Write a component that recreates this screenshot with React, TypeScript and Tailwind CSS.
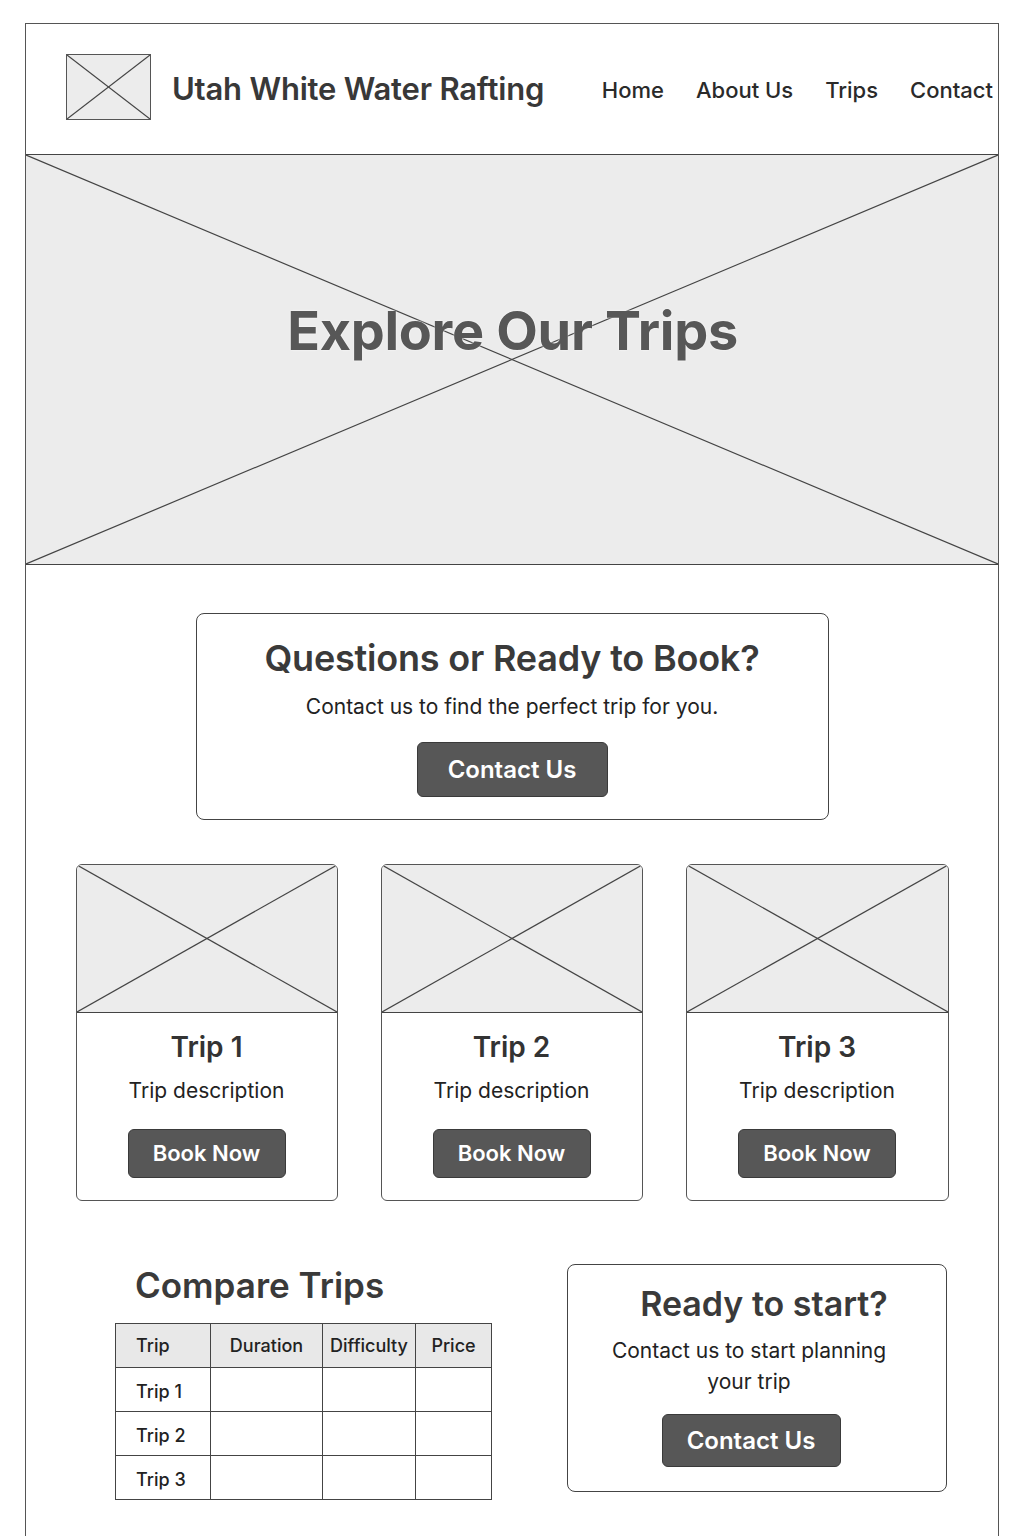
import React from "react";

const font = { fontFamily: "Inter, 'Noto Sans', sans-serif" };

// placeholder image: grey box with an X drawn corner to corner
function Cross({ className = "" }: { className?: string }) {
  return (
    <div className={`bg-[#ececec] ${className}`}>
      <svg
        className="absolute inset-0 w-full h-full"
        viewBox="0 0 100 100"
        preserveAspectRatio="none"
      >
        <line x1="0" y1="0" x2="100" y2="100" stroke="#444" strokeWidth="1.2" vectorEffect="non-scaling-stroke" />
        <line x1="100" y1="0" x2="0" y2="100" stroke="#444" strokeWidth="1.2" vectorEffect="non-scaling-stroke" />
      </svg>
    </div>
  );
}

const trips = ["Trip 1", "Trip 2", "Trip 3"];

function DarkButton({ children, className = "" }: { children: React.ReactNode; className?: string }) {
  return (
    <button
      className={`bg-[#575757] text-white font-semibold rounded-md border border-[#3a3a3a] flex items-center justify-center ${className}`}
    >
      {children}
    </button>
  );
}

export default function App() {
  return (
    <div className="bg-white min-h-[1536px] pt-[23px] px-[25px]" style={font}>
      <div className="border-x border-t border-[#555] min-h-[1513px]">
        {/* header */}
        <header className="h-[131px] flex items-center border-b border-[#444] pl-[40px] pr-[5px]">
          <Cross className="relative w-[85px] h-[66px] border border-[#555] -mt-[4px]" />
          <h1 className="ml-[21px] text-[31px] font-semibold text-[#383838] tracking-[-0.2px]">
            Utah White Water Rafting
          </h1>
          <nav className="ml-auto flex items-center gap-[32px] text-[22px] font-medium text-[#2a2a2a] mt-[2px]">
            <a>Home</a>
            <a>About Us</a>
            <a>Trips</a>
            <a>Contact</a>
          </nav>
        </header>

        {/* hero */}
        <div className="relative h-[410px] border-b border-[#444]">
          <Cross className="absolute inset-0" />
          <div className="relative h-full flex items-center justify-center pb-[58px]">
            <h2
              className="text-[54px] font-bold text-[#575757] tracking-[-0.3px] ml-[1px]"
              style={{ textShadow: "0 0 2px #fff" }}
            >
              Explore Our Trips
            </h2>
          </div>
        </div>

        {/* contact box */}
        <div className="flex justify-center pt-[48px]">
          <div className="w-[633px] h-[207px] border border-[#444] rounded-lg flex flex-col items-center pt-[18px]">
            <h3 className="text-[36px] font-semibold text-[#3a3a3a] leading-[52px] tracking-[-0.2px]">
              Questions or Ready to Book?
            </h3>
            <p className="text-[21px] text-[#222] mt-[9px] leading-[28px]">
              Contact us to find the perfect trip for you.
            </p>
            <DarkButton className="mt-[21px] w-[191px] h-[55px] text-[24px]">Contact Us</DarkButton>
          </div>
        </div>

        {/* cards */}
        <div className="grid grid-cols-[262px_262px_263px] justify-center gap-[43px] mt-[44px]">
          {trips.map((t) => (
            <div key={t} className="h-[337px] border border-[#555] rounded-md overflow-hidden flex flex-col items-center">
              <Cross className="relative w-full h-[148px] border-b border-[#444]" />
              <h4 className="mt-[15px] text-[28px] font-semibold text-[#333] leading-[38px]">{t}</h4>
              <p className="mt-[11px] text-[21px] text-[#222] leading-[28px]">Trip description</p>
              <DarkButton className="mt-[24px] w-[158px] h-[49px] text-[22px]">Book Now</DarkButton>
            </div>
          ))}
        </div>

        {/* bottom */}
        <div className="flex justify-between pl-[89px] pr-[51px] mt-[63px]">
          <div className="-mt-[1px]">
            <h3 className="ml-[20px] text-[35px] font-semibold text-[#3a3a3a] leading-[44px]">Compare Trips</h3>
            <table className="mt-[16px] border-collapse text-[18px] text-[#222] font-medium">
              <thead>
                <tr className="bg-[#e8e8e8] h-[44px]">
                  <th className="w-[95px] border border-[#444] text-left pl-[20px] font-medium">Trip</th>
                  <th className="w-[112px] border border-[#444] text-center font-medium">Duration</th>
                  <th className="w-[93px] border border-[#444] text-center font-medium">Difficulty</th>
                  <th className="w-[76px] border border-[#444] text-center font-medium">Price</th>
                </tr>
              </thead>
              <tbody>
                {trips.map((t) => (
                  <tr key={t} className="h-[44px]">
                    <td className="border border-[#444] pl-[20px] pt-[4px]">{t}</td>
                    <td className="border border-[#444]"></td>
                    <td className="border border-[#444]"></td>
                    <td className="border border-[#444]"></td>
                  </tr>
                ))}
              </tbody>
            </table>
          </div>

          <div className="w-[380px] h-[228px] border border-[#444] rounded-lg flex flex-col items-center pt-[17px]">
            <h3 className="text-[34px] font-semibold text-[#3a3a3a] leading-[44px] ml-[14px]">Ready to start?</h3>
            <p className="mt-[9px] text-[21px] text-[#222] leading-[31px] text-center w-[300px] mr-[16px]">
              Contact us to start planning your trip
            </p>
            <DarkButton className="mt-[17px] w-[179px] h-[53px] text-[24px] mr-[12px]">Contact Us</DarkButton>
          </div>
        </div>
      </div>
    </div>
  );
}
